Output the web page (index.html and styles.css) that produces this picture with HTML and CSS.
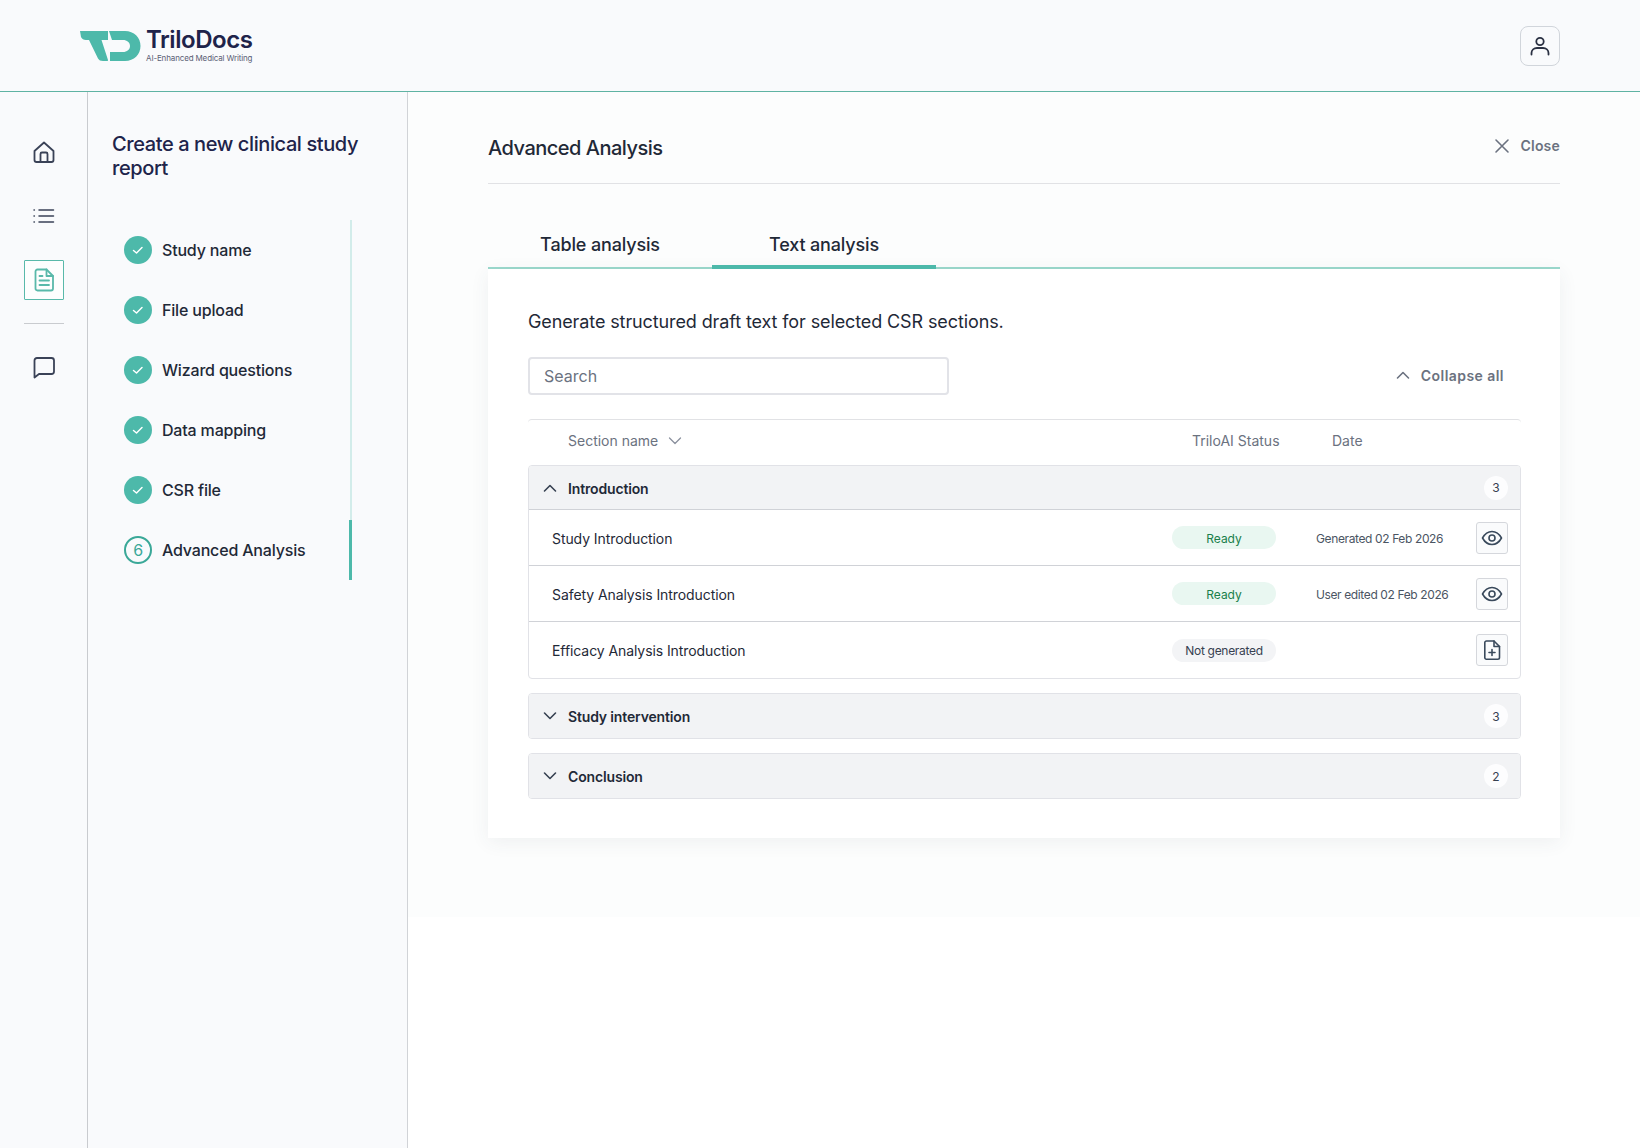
FILE: index.html
```html
<!DOCTYPE html>
<html lang="en">
<head>
<meta charset="utf-8">
<title>TriloDocs</title>
<link rel="stylesheet" href="styles.css">
</head>
<body>
<header class="topbar">
  <div class="brand">
    <svg class="brand-mark" width="61" height="32" viewBox="0 0 61 32">
      <path fill="#4db9aa" d="M0 1H28V10H21.500L28 30C28.200 30.600 27.700 31 27 31H23C20.500 31 19 30.200 18 28.500L9 10H6C3.500 10 2 9 1 7Z"/>
      <path fill="#4db9aa" d="M29 1H45C54 1 60.500 7.500 60.500 16C60.500 24.500 54 31 45 31H30V22H43C47 22 50 19.500 50 16C50 12.500 47 10 43 10H32Z"/>
    </svg>
    <div class="brand-text">
      <div class="brand-name">TriloDocs</div>
      <div class="brand-tag">AI-Enhanced Medical Writing</div>
    </div>
  </div>
  <button class="user-btn" aria-label="Account">
    <svg width="24" height="24" viewBox="0 0 24 24" fill="none" stroke="#2a3042" stroke-width="1.800" stroke-linecap="round"><circle cx="12" cy="7.500" r="3.700"/><path d="M3.500 20.500V19C3.500 16 6 14 9 14H15C18 14 20.500 16 20.500 19V20.500"/></svg>
  </button>
</header>
<div class="layout">
  <nav class="rail">
    <a class="rail-item"><svg width="24" height="24" viewBox="0 0 24 24" fill="none" stroke="#3a4257" stroke-width="1.800" stroke-linejoin="round"><path d="M2.500 11L12 2.500 21.500 11V20C21.500 21.200 20.700 22 19.500 22H4.500C3.300 22 2.500 21.200 2.500 20Z"/><path d="M8.500 22V14C8.500 13.200 9 12.500 10 12.500H14C15 12.500 15.500 13.200 15.500 14V22"/></svg></a>
    <a class="rail-item"><svg width="24" height="24" viewBox="0 0 24 24" fill="none" stroke="#3a4257" stroke-width="1.500" stroke-linecap="round"><path d="M7 6H21.500M7 12H21.500M7 18H21.500"/><path d="M2 6H2.400M2 12H2.400M2 18H2.400"/></svg></a>
    <a class="rail-item rail-active"><svg width="24" height="24" viewBox="0 0 24 24" fill="none" stroke="#59b9aa" stroke-width="1.800" stroke-linejoin="round" stroke-linecap="round"><path d="M5.500 1.500H14.500L21 8V20.500C21 21.700 20.200 22.500 19 22.500H5.500C4.300 22.500 3.500 21.700 3.500 20.500V3.500C3.500 2.300 4.300 1.500 5.500 1.500Z"/><path d="M14.500 1.500V8H21M7.500 8H10.500M7.500 12.500H17M7.500 17H17"/></svg></a>
    <div class="rail-sep"></div>
    <a class="rail-item"><svg width="24" height="24" viewBox="0 0 24 24" fill="none" stroke="#3a4257" stroke-width="1.800" stroke-linejoin="round"><path d="M2.500 4.500C2.500 3 3.500 2 5 2H19.500C21 2 22 3 22 4.500V15.500C22 17 21 18 19.500 18H7L2.500 21.500Z"/></svg></a>
  </nav>
  <aside class="wizard">
    <h2 class="wizard-title">Create a new clinical study report</h2>
    <ol class="steps">
      <li class="step"><span class="dot"><svg width="12" height="12" viewBox="0 0 12 12" fill="none" stroke="#fff" stroke-width="1.500" stroke-linecap="round" stroke-linejoin="round"><path d="M1.500 6.500L4.500 9 10 3.500"/></svg></span>Study name</li>
      <li class="step"><span class="dot"><svg width="12" height="12" viewBox="0 0 12 12" fill="none" stroke="#fff" stroke-width="1.500" stroke-linecap="round" stroke-linejoin="round"><path d="M1.500 6.500L4.500 9 10 3.500"/></svg></span>File upload</li>
      <li class="step"><span class="dot"><svg width="12" height="12" viewBox="0 0 12 12" fill="none" stroke="#fff" stroke-width="1.500" stroke-linecap="round" stroke-linejoin="round"><path d="M1.500 6.500L4.500 9 10 3.500"/></svg></span>Wizard questions</li>
      <li class="step"><span class="dot"><svg width="12" height="12" viewBox="0 0 12 12" fill="none" stroke="#fff" stroke-width="1.500" stroke-linecap="round" stroke-linejoin="round"><path d="M1.500 6.500L4.500 9 10 3.500"/></svg></span>Data mapping</li>
      <li class="step"><span class="dot"><svg width="12" height="12" viewBox="0 0 12 12" fill="none" stroke="#fff" stroke-width="1.500" stroke-linecap="round" stroke-linejoin="round"><path d="M1.500 6.500L4.500 9 10 3.500"/></svg></span>CSR file</li>
      <li class="step step-active"><span class="dot dot-current">6</span>Advanced Analysis</li>
    </ol>
  </aside>
  <main class="main">
    <div class="content">
      <div class="page-head">
        <h1 class="page-title">Advanced Analysis</h1>
        <a class="close"><svg width="16" height="16" viewBox="0 0 16 16" fill="none" stroke="#6b7280" stroke-width="1.600" stroke-linecap="round"><path d="M2 2L14 14M14 2L2 14"/></svg>Close</a>
      </div>
      <div class="tabs">
        <div class="tab">Table analysis</div>
        <div class="tab tab-active">Text analysis</div>
      </div>
      <section class="panel">
        <p class="intro">Generate structured draft text for selected CSR sections.</p>
        <div class="tools">
          <div class="search">Search</div>
          <a class="collapse"><svg width="14" height="14" viewBox="0 0 14 14" fill="none" stroke="#6b7280" stroke-width="1.600" stroke-linecap="round" stroke-linejoin="round"><path d="M1.500 10L7 4.500 12.500 10"/></svg>Collapse all</a>
        </div>
        <div class="thead">
          <div class="th-name">Section name<svg width="14" height="14" viewBox="0 0 14 14" fill="none" stroke="#8b919e" stroke-width="1.300" stroke-linecap="round" stroke-linejoin="round"><path d="M1.500 4L7 9.500 12.500 4"/></svg></div>
          <div class="th-status">TriloAI Status</div>
          <div class="th-date">Date</div>
        </div>
        <div class="group">
          <div class="group-head group-head-open">
            <svg class="chev" width="14" height="14" viewBox="0 0 14 14" fill="none" stroke="#374151" stroke-width="1.600" stroke-linecap="round" stroke-linejoin="round"><path d="M1.500 10L7 4.500 12.500 10"/></svg>
            <span class="group-name">Introduction</span><span class="count">3</span>
          </div>
          <div class="row">
            <span class="row-name">Study Introduction</span>
            <span class="pill pill-ready">Ready</span>
            <span class="row-date">Generated 02 Feb 2026</span>
            <button class="act" aria-label="View"><svg width="22" height="22" viewBox="0 0 22 22" fill="none" stroke="#3a4a5c" stroke-width="1.600"><path d="M1.500 11C4 6.500 7.200 4.500 11 4.500S18 6.500 20.500 11C18 15.500 14.800 17.500 11 17.500S4 15.500 1.500 11Z" stroke-linejoin="round"/><circle cx="11" cy="11" r="3"/></svg></button>
          </div>
          <div class="row">
            <span class="row-name">Safety Analysis Introduction</span>
            <span class="pill pill-ready">Ready</span>
            <span class="row-date">User edited 02 Feb 2026</span>
            <button class="act" aria-label="View"><svg width="22" height="22" viewBox="0 0 22 22" fill="none" stroke="#3a4a5c" stroke-width="1.600"><path d="M1.500 11C4 6.500 7.200 4.500 11 4.500S18 6.500 20.500 11C18 15.500 14.800 17.500 11 17.500S4 15.500 1.500 11Z" stroke-linejoin="round"/><circle cx="11" cy="11" r="3"/></svg></button>
          </div>
          <div class="row">
            <span class="row-name">Efficacy Analysis Introduction</span>
            <span class="pill pill-none">Not generated</span>
            <span class="row-date"></span>
            <button class="act" aria-label="Generate"><svg width="22" height="22" viewBox="0 0 22 22" fill="none" stroke="#3a4a5c" stroke-width="1.600" stroke-linecap="round" stroke-linejoin="round"><path d="M5.500 2H13L18.500 7.500V18.500C18.500 19.500 17.800 20.200 16.800 20.200H5.500C4.500 20.200 3.800 19.500 3.800 18.500V3.700C3.800 2.700 4.500 2 5.500 2Z"/><path d="M13 2V7.500H18.500M11 10.500V16.500M8 13.500H14"/></svg></button>
          </div>
        </div>
        <div class="group">
          <div class="group-head">
            <svg class="chev" width="14" height="14" viewBox="0 0 14 14" fill="none" stroke="#374151" stroke-width="1.600" stroke-linecap="round" stroke-linejoin="round"><path d="M1.500 4L7 9.500 12.500 4"/></svg>
            <span class="group-name">Study intervention</span><span class="count">3</span>
          </div>
        </div>
        <div class="group">
          <div class="group-head">
            <svg class="chev" width="14" height="14" viewBox="0 0 14 14" fill="none" stroke="#374151" stroke-width="1.600" stroke-linecap="round" stroke-linejoin="round"><path d="M1.500 4L7 9.500 12.500 4"/></svg>
            <span class="group-name">Conclusion</span><span class="count">2</span>
          </div>
        </div>
      </section>
    </div>
  </main>
</div>
</body>
</html>
```
FILE: styles.css
```css
* { box-sizing: border-box; }
html, body { margin: 0; height: 100%; }
body {
  width: 1640px;
  height: 1148px;
  overflow: hidden;
  display: flex;
  flex-direction: column;
  font-family: Inter, "Noto Sans", sans-serif;
  color: #1f2937;
  background: #f9fafc;
}
.topbar {
  height: 92px;
  flex: none;
  display: flex;
  align-items: center;
  justify-content: space-between;
  padding: 0 80px;
  border-bottom: 1px solid #5fb3a3;
}
.brand { display: flex; align-items: center; gap: 5px; }
.brand-mark { display: block; }
.brand-text { margin-bottom: 2px; }
.brand-name { font-size: 24px; line-height: 26px; font-weight: 600; color: #20234a; letter-spacing: -0.45px; }
.brand-tag { font-size: 8px; line-height: 10px; color: #5b6075; letter-spacing: -0.14px; }
.user-btn {
  width: 40px; height: 40px; padding: 0;
  display: flex; align-items: center; justify-content: center;
  background: #f9fafc; border: 1px solid #d1d5db; border-radius: 8px;
}
.layout { flex: 1; display: flex; min-height: 0; }
.rail {
  width: 88px; flex: none;
  border-right: 1px solid #c9cbcf;
  padding: 40px 23px 0 24px;
  display: flex; flex-direction: column; align-items: center;
}
.rail-item {
  width: 40px; height: 40px;
  display: flex; align-items: center; justify-content: center;
  margin-bottom: 24px;
}
.rail-active { border: 1px solid #59b9aa; background: #fdfefe; border-radius: 1px; margin-bottom: 23px; }
.rail-sep { width: 40px; height: 1px; background: #c9cbcf; margin-bottom: 24px; }
.wizard {
  width: 320px; flex: none;
  border-right: 1px solid #d1d3d7;
  padding: 40px 55px 0 24px;
}
.wizard-title {
  margin: 0 0 40px;
  font-size: 20px; line-height: 24px; font-weight: 500;
  color: #20234a; letter-spacing: -0.4px; width: 250px;
}
.steps { list-style: none; margin: 0; padding: 0; border-right: 2px solid #d2ecea; }
.step {
  height: 60px; padding-left: 12px;
  display: flex; align-items: center; gap: 10px;
  font-size: 16px; font-weight: 500; color: #1f2937; letter-spacing: -0.18px;
}
.step-active { border-right: 3px solid #4db9aa; margin-right: -2px; }
.dot {
  width: 28px; height: 28px; flex: none; border-radius: 50%;
  background: #4db9aa;
  display: flex; align-items: center; justify-content: center;
}
.dot-current {
  background: transparent; border: 2px solid #3aa898;
  color: #3aa898; font-size: 16px; font-weight: 400;
}
.main { flex: 1; min-width: 0; background: #fff; }
.content { background: #fcfdfd; padding: 0 80px 79px; }
.page-head {
  height: 92px;
  padding-top: 36px;
  display: flex; justify-content: space-between; align-items: flex-start;
  border-bottom: 1px solid #e1e2e5;
}
.page-title { margin: 0; font-size: 20px; line-height: 40px; font-weight: 500; color: #1f2937; letter-spacing: -0.5px; }
.close {
  display: flex; align-items: center; gap: 11px;
  font-size: 14px; line-height: 24px; font-weight: 600; color: #6b7280; margin-top: 6px; letter-spacing: 0.2px;
}
.close svg { margin-left: -1px; }
.tabs {
  margin-top: 37px;
  display: flex;
  border-bottom: 2px solid #9bd9cd;
}
.tab {
  width: 224px; height: 46px;
  display: flex; align-items: center; justify-content: center;
  font-size: 18px; font-weight: 500; color: #1f2937; letter-spacing: -0.15px;
}
.tab-active { box-shadow: inset 0 -2px 0 #4db9aa, 0 2px 0 #4db9aa; }
.panel {
  background: #fff;
  padding: 40px 39px 39px 40px;
  box-shadow: 0 4px 18px rgba(60, 70, 90, .07);
}
.intro { margin: 0 0 22px; font-size: 18px; line-height: 26px; color: #1f2937; letter-spacing: -0.11px; }
.tools { display: flex; align-items: center; justify-content: space-between; padding-right: 17px; height: 38px; }
.search {
  width: 421px; height: 38px; padding: 0 14px 1px;
  border: 2px solid #e2e3e8; border-radius: 4px;
  display: flex; align-items: center;
  font-size: 16px; color: #6b7280;
}
.collapse {
  display: flex; align-items: center; gap: 11px;
  font-size: 14px; font-weight: 600; color: #6b7280; letter-spacing: 0.45px; margin-bottom: 2px;
}
.thead {
  margin-top: 24px; height: 46px; padding-bottom: 4px;
  border-top: 1px solid #e1e2e5; border-radius: 4px 4px 0 0;
  display: flex; align-items: center;
  font-size: 14px; color: #6b7280;
}
.th-name { width: 624px; margin-left: 40px; display: flex; align-items: center; gap: 10px; }
.th-status { width: 140px; }
.group { border: 1px solid #e1e2e7; border-radius: 4px; margin-bottom: 14px; overflow: hidden; }
.group:last-child { margin-bottom: 0; }
.group-head {
  height: 44px; padding: 0 12px 0 14px;
  display: flex; align-items: center;
  background: #f2f3f5;
}
.group-head-open { border-bottom: 1px solid #d0d2d7; }
.chev { margin-right: 11px; flex: none; }
.group-name { flex: 1; font-size: 14px; font-weight: 600; color: #1f2937; letter-spacing: -0.15px; padding-top: 1px; }
.count {
  width: 24px; height: 24px; border-radius: 50%;
  background: #fdfdfe;
  display: flex; align-items: center; justify-content: center;
  font-size: 12px; color: #374151;
}
.row {
  height: 56px; padding: 0 12px 0 23px;
  display: flex; align-items: center;
  border-bottom: 1px solid #d0d2d7;
}
.row:last-child { border-bottom: 0; }
.row-name { width: 620px; font-size: 14px; color: #1f2937; letter-spacing: -0.08px; padding-top: 1px; }
.pill {
  width: 104px; height: 23px; border-radius: 12px; padding-top: 1px;
  display: flex; align-items: center; justify-content: center;
  font-size: 12px;
}
.pill-ready { background: #e9f7f1; color: #1a7f4b; }
.pill-none { background: #f3f4f6; color: #374151; letter-spacing: -0.3px; }
.row-date { flex: 1; padding: 1px 0 0 40px; font-size: 12px; color: #4b5563; white-space: nowrap; letter-spacing: -0.38px; }
.act {
  width: 32px; height: 32px; padding: 0; flex: none;
  display: flex; align-items: center; justify-content: center;
  background: #fafbfc; border: 1px solid #d5d7dc; border-radius: 3px;
}
```
